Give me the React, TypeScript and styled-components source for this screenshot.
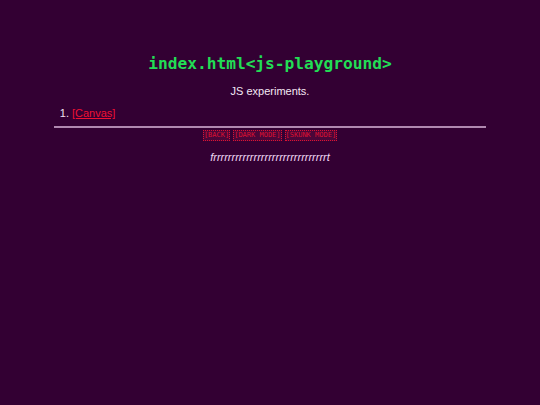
import React from 'react';
import styled, { createGlobalStyle } from 'styled-components';

const GlobalStyle = createGlobalStyle`
  html, body {
    margin: 0;
    padding: 0;
    background: #330033;
  }
  body {
    font-family: "Liberation Sans", Arial, sans-serif;
    color: #f0e0f0;
  }
`;

const Page = styled.main`
  width: 80%;
  margin: 0 auto;
  padding-top: 53px;
`;

const Title = styled.h1`
  margin: 0;
  text-align: center;
  font-family: "DejaVu Sans Mono", monospace;
  font-weight: bold;
  font-size: 16.2px;
  line-height: 22px;
  color: #22dd55;
`;

const Subtitle = styled.p`
  margin: 9px 0 0;
  text-align: center;
  font-size: 11px;
  line-height: 15px;
  color: #f4e8f4;
`;

const List = styled.ol`
  margin: 7px 0 0;
  padding-left: 18px;
  font-size: 11px;
  line-height: 15px;
`;

const Link = styled.a`
  color: #ee1133;
  text-decoration: underline;
`;

const Rule = styled.hr`
  margin: 5px 0 0;
  border: none;
  height: 2px;
  background: #b088b0;
`;

const Toolbar = styled.nav`
  display: flex;
  justify-content: center;
  gap: 3px;
  margin-top: 2px;
`;

const ModeButton = styled.button`
  background: #4a0638;
  color: #dd1133;
  border: 1px dotted #dd1133;
  font-family: "DejaVu Sans Mono", monospace;
  font-size: 7px;
  line-height: 9px;
  padding: 0;
  cursor: pointer;
`;

const Flourish = styled.p`
  margin: 9px 0 0;
  text-align: center;
  font-style: italic;
  font-size: 11px;
  line-height: 14px;
  color: #f0d8f4;
`;

const modes = ['[BACK]', '[DARK MODE]', '[SKUNK MODE]'];

const App = (): JSX.Element => {
  return (
    <>
      <GlobalStyle />
      <Page>
        <Title>index.html&lt;js-playground&gt;</Title>
        <Subtitle>JS experiments.</Subtitle>
        <List>
          <li>
            <Link href="#canvas">[Canvas]</Link>
          </li>
        </List>
        <Rule />
        <Toolbar>
          {modes.map((mode) => (
            <ModeButton key={mode}>{mode}</ModeButton>
          ))}
        </Toolbar>
        <Flourish>f{'r'.repeat(31)}t</Flourish>
      </Page>
    </>
  );
};

export default App;
